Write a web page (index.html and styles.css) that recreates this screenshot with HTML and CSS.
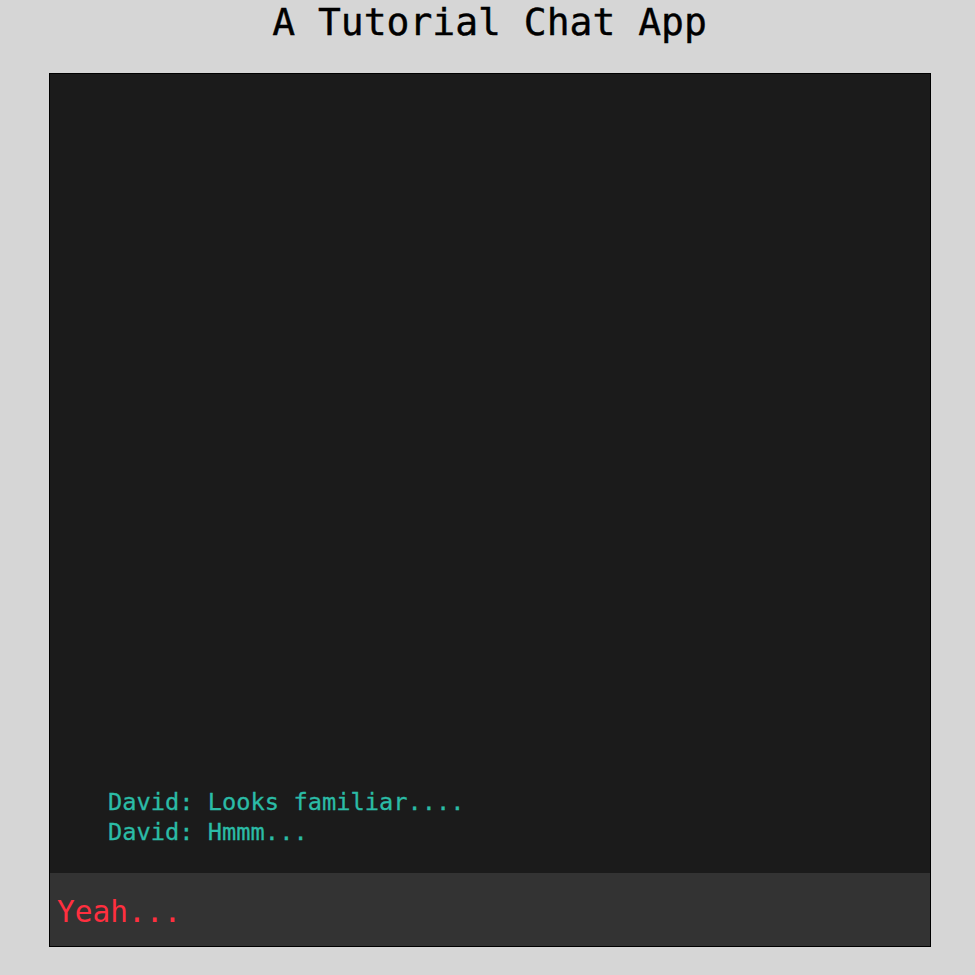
FILE: index.html
```html
<!DOCTYPE html>
<html>
<head>
<meta charset="utf-8">
<link rel="stylesheet" href="styles.css">
</head>
<body>
<h1 class="title">A Tutorial Chat App</h1>
<div class="chat">
  <ul class="messages">
    <li class="msg">David: Looks familiar....</li>
    <li class="msg">David: Hmmm...</li>
  </ul>
  <div class="compose">
    <input class="input" type="text" value="Yeah...">
  </div>
</div>
</body>
</html>
```
FILE: styles.css
```css
html, body {
  margin: 0;
  padding: 0;
  background: #d6d6d6;
  height: 100%;
}
body {
  font-family: "DejaVu Sans Mono", monospace;
}
.title {
  margin: 0;
  height: 73px;
  padding-left: 4px;
  font-size: 38px;
  font-weight: normal;
  line-height: 44px;
  text-align: center;
  color: #000;
  -webkit-text-stroke: 0.4px #000;
}
.chat {
  margin-left: 49px;
  width: 880px;
  height: 872px;
  border: 1px solid #000;
  display: flex;
  flex-direction: column;
  background: #1b1b1b;
}
.messages {
  flex: 1;
  margin: 0;
  list-style: none;
  padding: 0 0 26px 58px;
  display: flex;
  flex-direction: column;
  justify-content: flex-end;
}
.msg {
  color: #2bbca6;
  font-size: 23.7px;
  line-height: 30px;
  -webkit-text-stroke: 0.3px #2bbca6;
}
.compose {
  height: 73px;
  background: #333333;
  display: flex;
  align-items: center;
}
.input {
  width: 100%;
  box-sizing: border-box;
  border: none;
  outline: none;
  background: transparent;
  color: #ff2f3f;
  font-family: "DejaVu Sans Mono", monospace;
  font-size: 29.5px;
  padding: 0 0 0 7px;
  margin-top: 4px;
}
```
